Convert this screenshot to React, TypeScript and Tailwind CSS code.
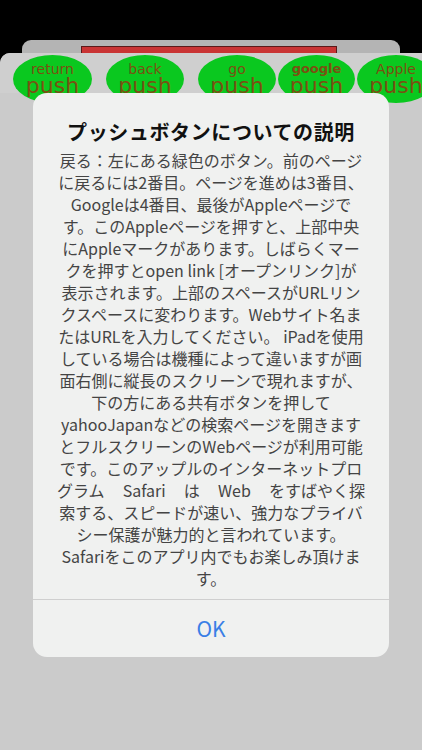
const lines: string[] = [
  '戻る：左にある緑色のボタン。前のページ',
  'に戻るには2番目。ページを進めは3番目、',
  'Googleは4番目、最後がAppleページで',
  'す。このAppleページを押すと、上部中央',
  'にAppleマークがあります。しばらくマー',
  'クを押すとopen link [オープンリンク]が',
  '表示されます。上部のスペースがURLリン',
  'クスペースに変わります。Webサイト名ま',
  'たはURLを入力してください。 iPadを使用',
  'している場合は機種によって違いますが画',
  '面右側に縦長のスクリーンで現れますが、',
  '下の方にある共有ボタンを押して',
  'yahooJapanなどの検索ページを開きます',
  'とフルスクリーンのWebページが利用可能',
  'です。このアップルのインターネットプロ',
  '__SPREAD__',
  '索する、スピードが速い、強力なプライバ',
  'シー保護が魅力的と言われています。',
  'Safariをこのアプリ内でもお楽しみ頂けま',
  'す。',
];

const spread = ['グラム', 'Safari', 'は', 'Web', 'をすばやく探'];

interface PushButton {
  label: string;
  left: number;
  width: number;
  bold?: boolean;
}

const buttons: PushButton[] = [
  { label: 'return', left: 13, width: 79 },
  { label: 'back', left: 106, width: 78 },
  { label: 'go', left: 198, width: 78 },
  { label: 'google', left: 278, width: 77, bold: true },
  { label: 'Apple', left: 357, width: 78 },
];

export default function App() {
  return (
    <div
      className="relative w-[422px] h-[750px] overflow-hidden bg-black"
      style={{ fontFamily: '"Noto Sans CJK JP", "Noto Sans", sans-serif' }}
    >
      <div className="h-[40px]" />
      {/* back sheet */}
      <div className="mx-[22px] h-[13px] bg-[#b4b4b4] rounded-t-[9px] pl-[59px] pt-[6px]">
        <div className="w-[256px] h-[7px] bg-[#c93434] border border-[#5a1a1a] border-b-0" />
      </div>
      {/* front sheet */}
      <div className="relative h-[697px] bg-[#cbcbcb] rounded-tl-[10px]">
        <div className="absolute left-0 right-0 top-0 h-[40px] bg-[#cfcfcf] rounded-tl-[10px]" />
        {buttons.map((b) => (
          <div
            key={b.label}
            className="absolute top-[2px] h-[48px] rounded-[50%] bg-[#0ac81f] flex flex-col items-center text-[#7a5012]"
            style={{ left: b.left, width: b.width, fontFamily: '"DejaVu Sans", sans-serif' }}
          >
            <span className={`mt-[7px] leading-[14px] ${b.bold ? 'text-[13px] font-bold' : 'text-[14px]'}`}>{b.label}</span>
            <span className="text-[22px] leading-[20px]">push</span>
          </div>
        ))}
      </div>

      {/* alert */}
      <div className="absolute left-[33px] top-[93px] w-[356px] h-[564px] rounded-[14px] bg-[#f0f1f0] flex flex-col">
        <div className="pt-[27px] px-[10px] pb-[10px] flex flex-col items-center">
          <div className="text-[20px] leading-[24px] font-bold text-[#111] tracking-[0.6px]">
            プッシュボタンについての説明
          </div>
          <div className="mt-[5px] w-full flex flex-col items-center text-[16px] leading-[22px] text-[#444]">
            {lines.map((l, i) =>
              l === '__SPREAD__' ? (
                <div key={i} className="w-[308px] flex justify-between whitespace-nowrap">
                  {spread.map((s) => (
                    <span key={s}>{s}</span>
                  ))}
                </div>
              ) : (
                <div key={i} className="whitespace-nowrap">{l}</div>
              )
            )}
          </div>
        </div>
        <div className="h-px bg-[#cfcfcf]" />
        <div className="flex-1 flex items-center justify-center text-[21px] text-[#3a7fe6]">OK</div>
      </div>
    </div>
  );
}
